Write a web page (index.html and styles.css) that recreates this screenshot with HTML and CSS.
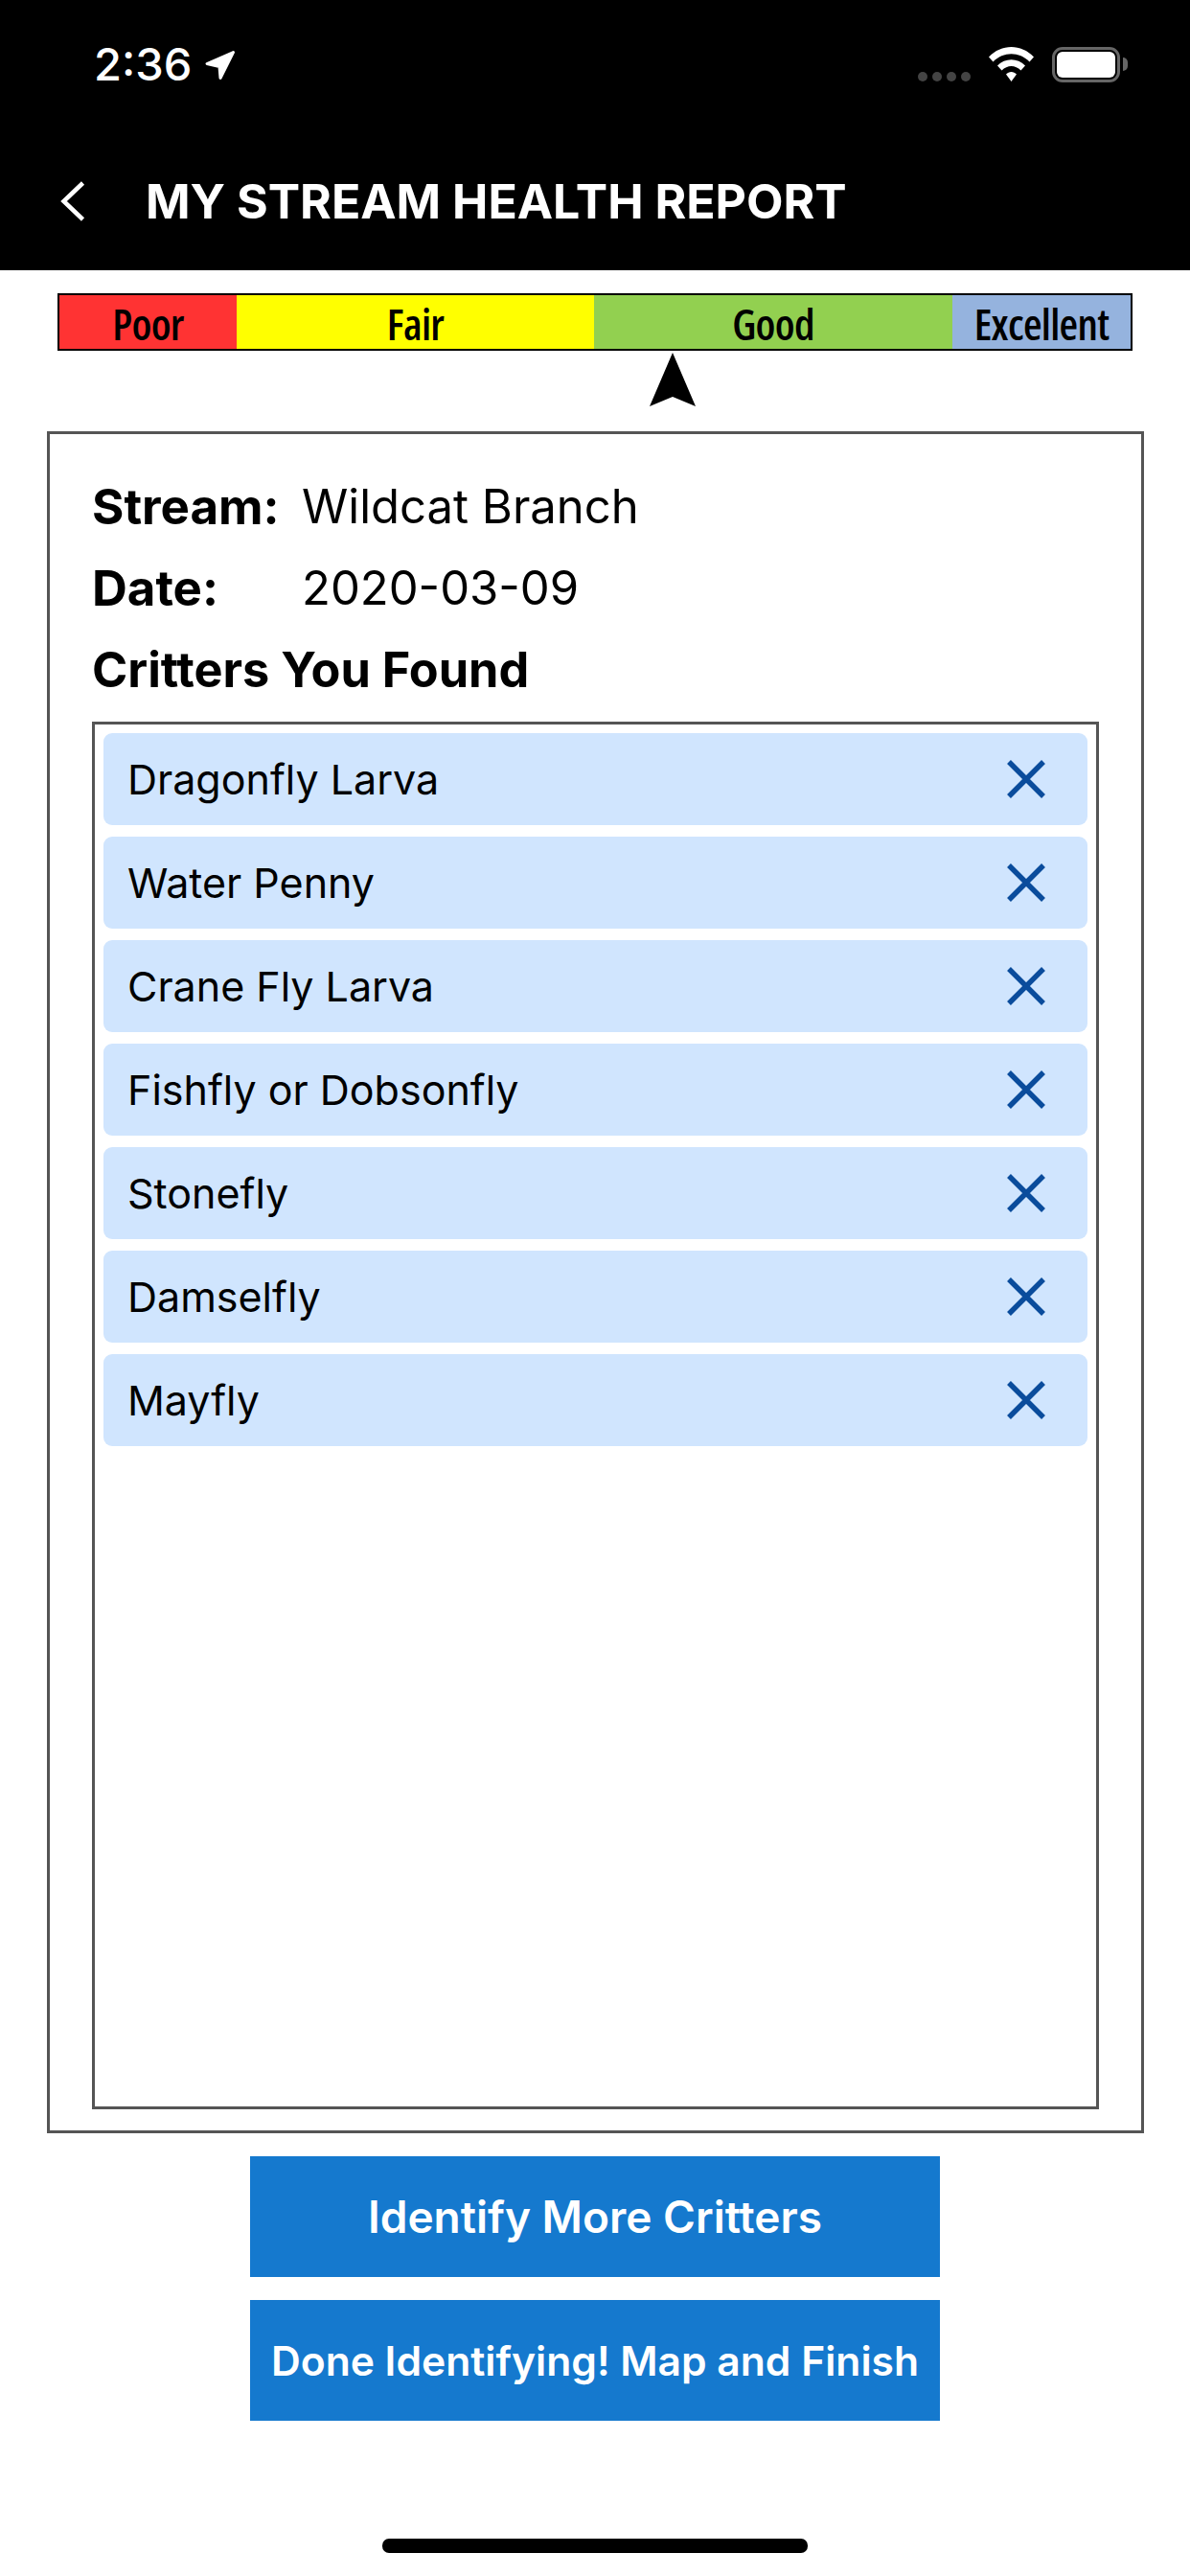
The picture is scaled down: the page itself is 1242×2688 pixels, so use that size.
FILE: index.html
```html
<!DOCTYPE html>
<html lang="en">
<head>
  <meta charset="UTF-8">
  <meta name="viewport" content="width=device-width, initial-scale=1.0">
  <title>My Stream Health Report</title>
  <link rel="stylesheet" href="styles.css">
</head>
<body>
<div class="page">

  <!-- Status bar and title -->
  <header class="top-bar">
    <div class="status-bar">
      <div class="status-time">
        <span>2:36</span>
        <svg class="location-icon" width="32" height="32" viewBox="0 0 32 32"><path d="M29.500 2.500 L2 14.500 L15 17.500 L16 29.500 Z" fill="#fff" stroke="#fff" stroke-width="3" stroke-linejoin="round"/></svg>
      </div>
      <div class="status-icons">
        <div class="signal-dots"><i></i><i></i><i></i><i></i></div>
        <svg class="wifi-icon" width="47" height="36" viewBox="0 0 47 36"><path d="M0 10.5 C13 -3.5 34 -3.5 47 10.5 L42.5 15.5 C32 4.5 15 4.5 4.5 15.5 Z M9 19.5 C17 11 30 11 38 19.5 L33.5 24.5 C27.500 18.500 19.500 18.500 13.500 24.500 Z M18 28.500 C21 25 26 25 29 28.500 L23.500 36 Z" fill="#fff"/></svg>
        <div class="battery"><div class="battery-fill"></div></div>
      </div>
    </div>
    <div class="title-row">
      <svg class="back-icon" width="26" height="42" viewBox="0 0 26 42"><path d="M23.500 2 L3.500 21 L23.500 40" fill="none" stroke="#fff" stroke-width="4.500"/></svg>
      <h1>MY STREAM HEALTH REPORT</h1>
    </div>
  </header>

  <!-- Score scale -->
  <div class="scale">
    <div class="scale-cell poor"><span>Poor</span></div>
    <div class="scale-cell fair"><span>Fair</span></div>
    <div class="scale-cell good"><span>Good</span></div>
    <div class="scale-cell excellent"><span>Excellent</span></div>
  </div>
  <div class="scale-pointer">
    <svg width="48" height="56" viewBox="0 0 48 56"><path d="M24 0 L48 56 L24 46 L0 56 Z" fill="#000"/></svg>
  </div>

  <!-- Report -->
  <section class="report">
    <div class="info-row"><span class="info-label">Stream:</span><span>Wildcat Branch</span></div>
    <div class="info-row"><span class="info-label">Date:</span><span>2020-03-09</span></div>
    <h2>Critters You Found</h2>
    <div class="critter-list">
      <div class="critter-row"><span>Dragonfly Larva</span><svg width="40" height="40" viewBox="0 0 40 40"><path d="M2 2 L38 38 M38 2 L2 38" stroke="#0a4c9c" stroke-width="5.500"/></svg></div>
      <div class="critter-row"><span>Water Penny</span><svg width="40" height="40" viewBox="0 0 40 40"><path d="M2 2 L38 38 M38 2 L2 38" stroke="#0a4c9c" stroke-width="5.500"/></svg></div>
      <div class="critter-row"><span>Crane Fly Larva</span><svg width="40" height="40" viewBox="0 0 40 40"><path d="M2 2 L38 38 M38 2 L2 38" stroke="#0a4c9c" stroke-width="5.500"/></svg></div>
      <div class="critter-row"><span>Fishfly or Dobsonfly</span><svg width="40" height="40" viewBox="0 0 40 40"><path d="M2 2 L38 38 M38 2 L2 38" stroke="#0a4c9c" stroke-width="5.500"/></svg></div>
      <div class="critter-row"><span>Stonefly</span><svg width="40" height="40" viewBox="0 0 40 40"><path d="M2 2 L38 38 M38 2 L2 38" stroke="#0a4c9c" stroke-width="5.500"/></svg></div>
      <div class="critter-row"><span>Damselfly</span><svg width="40" height="40" viewBox="0 0 40 40"><path d="M2 2 L38 38 M38 2 L2 38" stroke="#0a4c9c" stroke-width="5.500"/></svg></div>
      <div class="critter-row"><span>Mayfly</span><svg width="40" height="40" viewBox="0 0 40 40"><path d="M2 2 L38 38 M38 2 L2 38" stroke="#0a4c9c" stroke-width="5.500"/></svg></div>
    </div>
  </section>

  <!-- Actions -->
  <div class="actions">
    <button type="button" class="more-btn">Identify More Critters</button>
    <button type="button" class="done-btn">Done Identifying! Map and Finish</button>
  </div>

  <div class="home-bar"></div>
</div>
</body>
</html>
```

FILE: styles.css
```css
body {
  margin: 0;
  background-color: #fff;
  font-family: Inter, "Liberation Sans", sans-serif;
  color: #000;
}
.page {
  width: 1242px;
  height: 2688px;
  overflow: hidden;
}
.top-bar {
  height: 282px;
  background-color: #000;
  color: #fff;
}
.status-bar {
  height: 136px;
  display: flex;
  justify-content: space-between;
  box-sizing: border-box;
  padding: 44px 73px 0 98px;
}
.status-time {
  display: flex;
  align-items: flex-start;
  gap: 14px;
  font-size: 47px;
  font-weight: 500;
  line-height: 46px;
}
.location-icon {
  margin-top: 8px;
}
.status-icons {
  display: flex;
  align-items: flex-start;
  gap: 19px;
  padding-top: 5px;
}
.signal-dots {
  display: flex;
  gap: 5px;
  margin-top: 26px;
}
.signal-dots i {
  width: 10px;
  height: 10px;
  border-radius: 50%;
  background-color: #444;
}
.battery {
  position: relative;
  box-sizing: border-box;
  width: 71px;
  height: 37px;
  padding: 2px;
  border: 3px solid #666;
  border-radius: 11px;
}
.battery::after {
  content: "";
  position: absolute;
  top: 8px;
  right: -11px;
  width: 5px;
  height: 14px;
  border-radius: 0 7px 7px 0;
  background-color: #666;
}
.battery-fill {
  height: 100%;
  border-radius: 6px;
  background-color: #fff;
}
.title-row {
  display: flex;
  align-items: center;
  gap: 63px;
  padding: 53px 0 0 63px;
}
.title-row h1 {
  margin: 0;
  font-size: 50px;
  font-weight: 700;
  line-height: 42px;
  white-space: nowrap;
}
.scale {
  display: flex;
  box-sizing: border-box;
  height: 60px;
  margin: 24px 60px 0;
  border: 2px solid #000;
  font-family: "Open Sans", sans-serif;
  font-size: 45px;
  font-weight: 600;
  font-stretch: 75%;
  letter-spacing: -0.7px;
}
.scale-cell {
  display: flex;
  flex: none;
  align-items: center;
  justify-content: center;
  padding-top: 2px;
}
.poor {
  width: 185px;
  background-color: #ff3333;
}
.fair {
  width: 373px;
  background-color: #ffff00;
}
.good {
  width: 374px;
  background-color: #92d050;
}
.excellent {
  width: 186px;
  background-color: #95b3de;
}
.scale-pointer {
  height: 84px;
  padding: 2px 0 0 678px;
  box-sizing: border-box;
}
.scale-pointer svg {
  display: block;
}
.report {
  box-sizing: border-box;
  width: 1145px;
  height: 1776px;
  margin-left: 49px;
  padding: 33px 44px 0;
  border: 3px solid #555;
}
.info-row {
  display: flex;
  height: 85px;
  align-items: center;
  font-size: 49px;
}
.info-label {
  width: 219px;
  font-size: 51px;
  font-weight: 700;
}
.report h2 {
  margin: 0 0 12px;
  font-size: 50.4px;
  font-weight: 700;
  line-height: 85px;
}
.critter-list {
  box-sizing: border-box;
  width: 1051px;
  height: 1448px;
  padding: 9px;
  border: 3px solid #555;
  display: flex;
  flex-direction: column;
  gap: 12px;
}
.critter-row {
  display: flex;
  flex: none;
  height: 96px;
  align-items: center;
  justify-content: space-between;
  padding: 0 44px 0 25px;
  border-radius: 9px;
  background-color: #d0e5fe;
  font-size: 43px;
}
.critter-row svg {
  display: block;
}
.actions {
  display: flex;
  flex-direction: column;
  align-items: center;
  gap: 24px;
  margin-top: 24px;
}
.actions button {
  width: 720px;
  height: 126px;
  padding: 0;
  border: none;
  background-color: #1579ce;
  color: #fff;
  font-family: inherit;
  font-weight: 600;
  white-space: nowrap;
}
.more-btn {
  font-size: 46px;
}
.done-btn {
  font-size: 42.6px;
}
.home-bar {
  width: 444px;
  height: 15px;
  margin: 123px auto 0;
  border-radius: 7px;
  background-color: #000;
}
```
